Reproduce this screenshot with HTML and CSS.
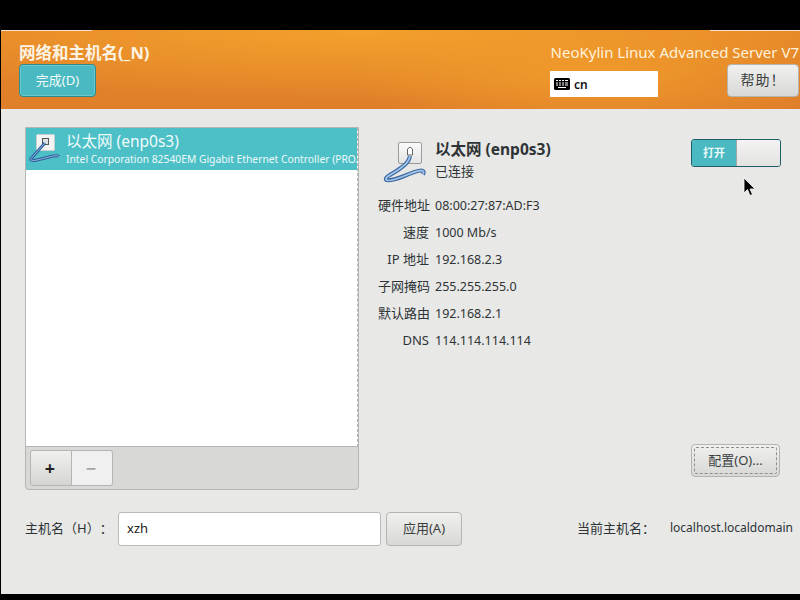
FILE: index.html
```html
<!doctype html>
<html>
<head>
  <meta charset="utf-8">
  <title>网络和主机名</title>
  <link rel="stylesheet" href="styles.css">
</head>
<body>
  <div class="screen">
    <header class="topbar">
      <div class="topbar-left">
        <h1>网络和主机名(_N)</h1>
        <button class="btn btn-done">完成(D)</button>
      </div>
      <div class="topbar-right">
        <div class="product">NeoKylin Linux Advanced Server V7</div>
        <div class="topbar-controls">
          <div class="layout-box">
            <svg class="kbd" width="16" height="12" viewBox="0 0 16 12">
              <rect width="16" height="12" rx="1.5" fill="#000"/>
              <path d="M2 2.5h2M5 2.5h2M8 2.5h2M11 2.5h3M2 5h2M5 5h2M8 5h2M11 5h3M2 7h2M5 7h2M8 7h2M11 7h3M4 9.5h8" stroke="#fff" stroke-width="1"/>
            </svg>
            <span>cn</span>
          </div>
          <button class="btn btn-help">帮助！</button>
        </div>
      </div>
    </header>

    <main class="content">
      <div class="columns">
        <section class="device-list">
          <div class="list-body">
            <div class="device-row">
              <svg class="row-icon" width="36" height="32" viewBox="0 0 36 32">
                <rect x="8.500" y="1.500" width="18" height="16" rx="1" fill="#f4f4f3" stroke="#c9cfcf"/>
                <rect x="14.500" y="5.500" width="6" height="6" fill="#dfe3e3" stroke="#555"/>
                <path d="M17 10 3 25.500c-1 2 2 2.500 6 1.500l16-4c3-.6 5-.4 6 .5" fill="none" stroke="#2f5f9c" stroke-width="3"/>
                <path d="M17 10 3 25.500c-1 2 2 2.500 6 1.500l16-4c3-.6 5-.4 6 .5" fill="none" stroke="#8fb4e0" stroke-width="1"/>
              </svg>
              <div class="row-text">
                <div class="row-name">以太网 (enp0s3)</div>
                <div class="row-desc">Intel Corporation 82540EM Gigabit Ethernet Controller (PRO/1000 MT)</div>
              </div>
            </div>
          </div>
          <div class="list-toolbar">
            <button class="tool tool-add">+</button>
            <button class="tool tool-remove">−</button>
          </div>
        </section>

        <section class="device-detail">
          <div class="detail-head">
            <svg class="detail-icon" width="50" height="50" viewBox="0 0 50 50">
              <defs>
                <linearGradient id="plate" x1="0" y1="0" x2="0" y2="1">
                  <stop offset="0" stop-color="#fbfbfb"/>
                  <stop offset="1" stop-color="#e4e4e4"/>
                </linearGradient>
              </defs>
              <rect x="18.500" y="3.500" width="23" height="21" rx="1.500" fill="url(#plate)" stroke="#9a9a9a"/>
              <path d="M27.500 16v-6l2.500-2 2.500 2v6z" fill="#fff" stroke="#666"/>
              <path d="M30 17c-1 6-5 9-12 14-6 4-13 7-12 9.500 1 2 9 0 17-3 7-3 14-6 18-6 3 0 3 2 2 4" fill="none" stroke="#3a689f" stroke-width="4.200"/>
              <path d="M30 17c-1 6-5 9-12 14-6 4-13 7-12 9.500 1 2 9 0 17-3 7-3 14-6 18-6 3 0 3 2 2 4" fill="none" stroke="#a3c3ea" stroke-width="1.800"/>
            </svg>
            <div class="detail-title">
              <div class="detail-name">以太网 (enp0s3)</div>
              <div class="detail-state">已连接</div>
            </div>
            <div class="switch">
              <span class="switch-on">打开</span>
              <span class="switch-knob"></span>
            </div>
          </div>
          <dl class="props">
            <dt>硬件地址</dt><dd>08:00:27:87:AD:F3</dd>
            <dt>速度</dt><dd>1000 Mb/s</dd>
            <dt>IP 地址</dt><dd>192.168.2.3</dd>
            <dt>子网掩码</dt><dd>255.255.255.0</dd>
            <dt>默认路由</dt><dd>192.168.2.1</dd>
            <dt>DNS</dt><dd>114.114.114.114</dd>
          </dl>
          <div class="detail-foot">
            <button class="btn btn-config"><span>配置(O)...</span></button>
          </div>
        </section>
      </div>

      <div class="host-row">
        <label class="host-label">主机名（H）：</label>
        <div class="host-input">xzh</div>
        <button class="btn btn-apply">应用(A)</button>
        <div class="host-current">
          <span class="current-label">当前主机名：</span>
          <span class="current-value">localhost.localdomain</span>
        </div>
      </div>
    </main>

    <svg class="cursor" width="14" height="21" viewBox="0 0 14 21">
      <path d="M1 1v15l3.500-3.500 2.500 6 2.500-1-2.500-5.500h5z" fill="#000" stroke="#fff" stroke-width=".8"/>
    </svg>
  </div>
</body>
</html>
```
FILE: styles.css
```css
* {
  box-sizing: border-box;
}
html, body {
  margin: 0;
  height: 100%;
  background: #000;
}
body {
  font-family: "Noto Sans", "Noto Sans CJK SC", sans-serif;
  font-size: 13px;
  color: #2e3436;
  overflow: hidden;
  text-spacing-trim: space-all;
}
button {
  font: inherit;
  text-spacing-trim: space-all;
}

.screen {
  position: relative;
  width: 800px;
  height: 600px;
  padding: 30px 0 6px 1px;
}

/* top bar */
.topbar {
  display: flex;
  justify-content: space-between;
  height: 79px;
  color: #fff;
  background:
    linear-gradient(#f3e3cf, #f3e3cf) 0 0 / 91px 1px no-repeat,
    linear-gradient(#f3e3cf, #f3e3cf) 100% 0 / 90px 1px no-repeat,
    radial-gradient(240px 60px at 590px 45px, rgba(241, 156, 43, .85), rgba(241, 156, 43, 0)),
    radial-gradient(520px 70px at 360px 0, #f3a02c, rgba(243, 160, 44, 0)),
    linear-gradient(#e58729, #df7f2a);
}
.topbar-left {
  padding: 12px 0 0 18px;
}
h1 {
  margin: 0 0 1px;
  font-size: 16.500px;
  line-height: 21px;
  font-weight: 700;
  color: #fdf3e3;
}
.topbar-right {
  display: flex;
  flex-direction: column;
  align-items: flex-end;
  padding: 11px 1px 0 0;
}
.product {
  font-size: 15px;
  line-height: 23px;
  color: #fff2dd;
  white-space: nowrap;
}
.topbar-controls {
  display: flex;
  align-items: flex-end;
  height: 33px;
  gap: 69px;
  width: 249px;
}
.layout-box {
  display: flex;
  align-items: center;
  gap: 4px;
  width: 108px;
  height: 26px;
  padding-left: 4px;
  background: #fff;
  color: #111;
  font-size: 12px;
  font-weight: 600;
}

/* buttons */
.btn {
  display: block;
  height: 33px;
  border: 1px solid #b4b4b2;
  border-radius: 4px;
  color: #3b3f40;
  background: linear-gradient(#f0f0ef, #d8d8d6);
  padding: 0 0 3px;
}
.btn-done {
  width: 77px;
  color: #f2fbfb;
  background: #4bb9c1;
  border-color: #2f8a90;
  box-shadow: inset 0 0 0 1px #6cc8ce;
}
.btn-help {
  width: 72px;
  margin-left: auto;
  font-size: 14px;
  letter-spacing: 1px;
}
.btn-config {
  width: 89px;
  margin-left: auto;
  margin-right: 1px;
  padding: 2px;
}
.btn-config span {
  display: flex;
  align-items: center;
  justify-content: center;
  height: 100%;
  padding-bottom: 2px;
  border: 1px dashed #8f8f8d;
  border-radius: 2px;
}
.btn-apply {
  width: 76px;
  height: 34px;
  margin-left: 5px;
}

/* main area */
.content {
  height: 485px;
  padding: 18px 0 0 24px;
  background: #e8e8e7;
}
.columns {
  display: flex;
  height: 363px;
}

.device-list {
  display: flex;
  flex-direction: column;
  width: 334px;
  border: 1px solid #b5b5b3;
  border-radius: 0 0 4px 4px;
  background: #d8d8d7;
}
.list-body {
  flex: 1;
  background: #fff;
  border-bottom: 1px solid #b5b5b3;
  border-right: 1px dashed #b5b5b3;
}
.device-row {
  display: flex;
  height: 42px;
  background: #4cc0c6;
  color: #fff;
}
.row-icon {
  flex: none;
  margin: 5px 0 0 2px;
}
.row-text {
  flex: 1;
  min-width: 0;
  padding: 4px 0 0 2px;
  overflow: hidden;
}
.row-name {
  font-size: 15.500px;
  line-height: 18px;
  color: #f0fbfb;
}
.row-desc {
  font-size: 10.300px;
  line-height: 18px;
  white-space: nowrap;
  overflow: hidden;
  color: #eefafa;
}
.list-toolbar {
  display: flex;
  height: 42px;
  padding: 3px 0 0 4px;
}
.tool {
  width: 42px;
  height: 36px;
  padding: 0 2px 0 0;
  border: 1px solid #b5b5b3;
  font-size: 18px;
  font-weight: 700;
  line-height: 1;
}
.tool-add {
  border-radius: 3px 0 0 3px;
  color: #222;
  background: linear-gradient(#f0f0ef, #d5d5d3);
}
.tool-remove {
  width: 41px;
  border-left: 0;
  border-radius: 0 3px 3px 0;
  color: #a4a4a4;
  background: #f0f0f0;
}

/* right column */
.device-detail {
  display: flex;
  flex-direction: column;
  width: 422px;
  padding: 12px 0 0 19px;
}
.detail-head {
  display: flex;
  height: 50px;
}
.detail-icon {
  flex: none;
  margin-left: 2px;
}
.detail-title {
  flex: 1;
  padding: 0 0 0 5px;
}
.detail-name {
  font-size: 15.500px;
  line-height: 20px;
  font-weight: 700;
  color: #2e3436;
}
.detail-state {
  font-size: 13px;
  line-height: 24px;
}
.switch {
  display: flex;
  flex: none;
  width: 90px;
  height: 28px;
  border: 1px solid #1f5d68;
  border-radius: 3px;
  overflow: hidden;
}
.switch-on {
  width: 44px;
  background: #4bb9c1;
  color: #eafafa;
  font-size: 11px;
  font-weight: 700;
  line-height: 26px;
  text-align: center;
}
.switch-knob {
  flex: 1;
  border-left: 1px solid #9fa9a9;
  background: linear-gradient(#f4f4f3, #e2e2e0);
}

.props {
  display: grid;
  grid-template-columns: 51px auto;
  column-gap: 6px;
  grid-auto-rows: 27px;
  margin: 3px 0 0;
  line-height: 27px;
  font-size: 12.500px;
}
.props dt {
  font-size: 13px;
  text-align: right;
  white-space: nowrap;
}
.props dd {
  margin: 0;
}
.detail-foot {
  margin-top: 90px;
}

/* host name row */
.host-row {
  display: flex;
  align-items: center;
  height: 34px;
  margin-top: 22px;
}
.host-label {
  width: 93px;
  padding-bottom: 3px;
  font-size: 13px;
  white-space: nowrap;
}
.host-input {
  width: 263px;
  height: 34px;
  padding-left: 8px;
  border: 1px solid #b9b9b7;
  border-radius: 3px;
  background: #fff;
  line-height: 30px;
  color: #222;
}
.host-current {
  display: flex;
  align-items: center;
  margin-left: 115px;
  padding-bottom: 3px;
  white-space: nowrap;
}
.current-label {
  width: 93px;
  font-size: 13px;
}
.current-value {
  font-size: 12px;
}

.cursor {
  position: absolute;
  left: 743px;
  top: 177px;
}
```
